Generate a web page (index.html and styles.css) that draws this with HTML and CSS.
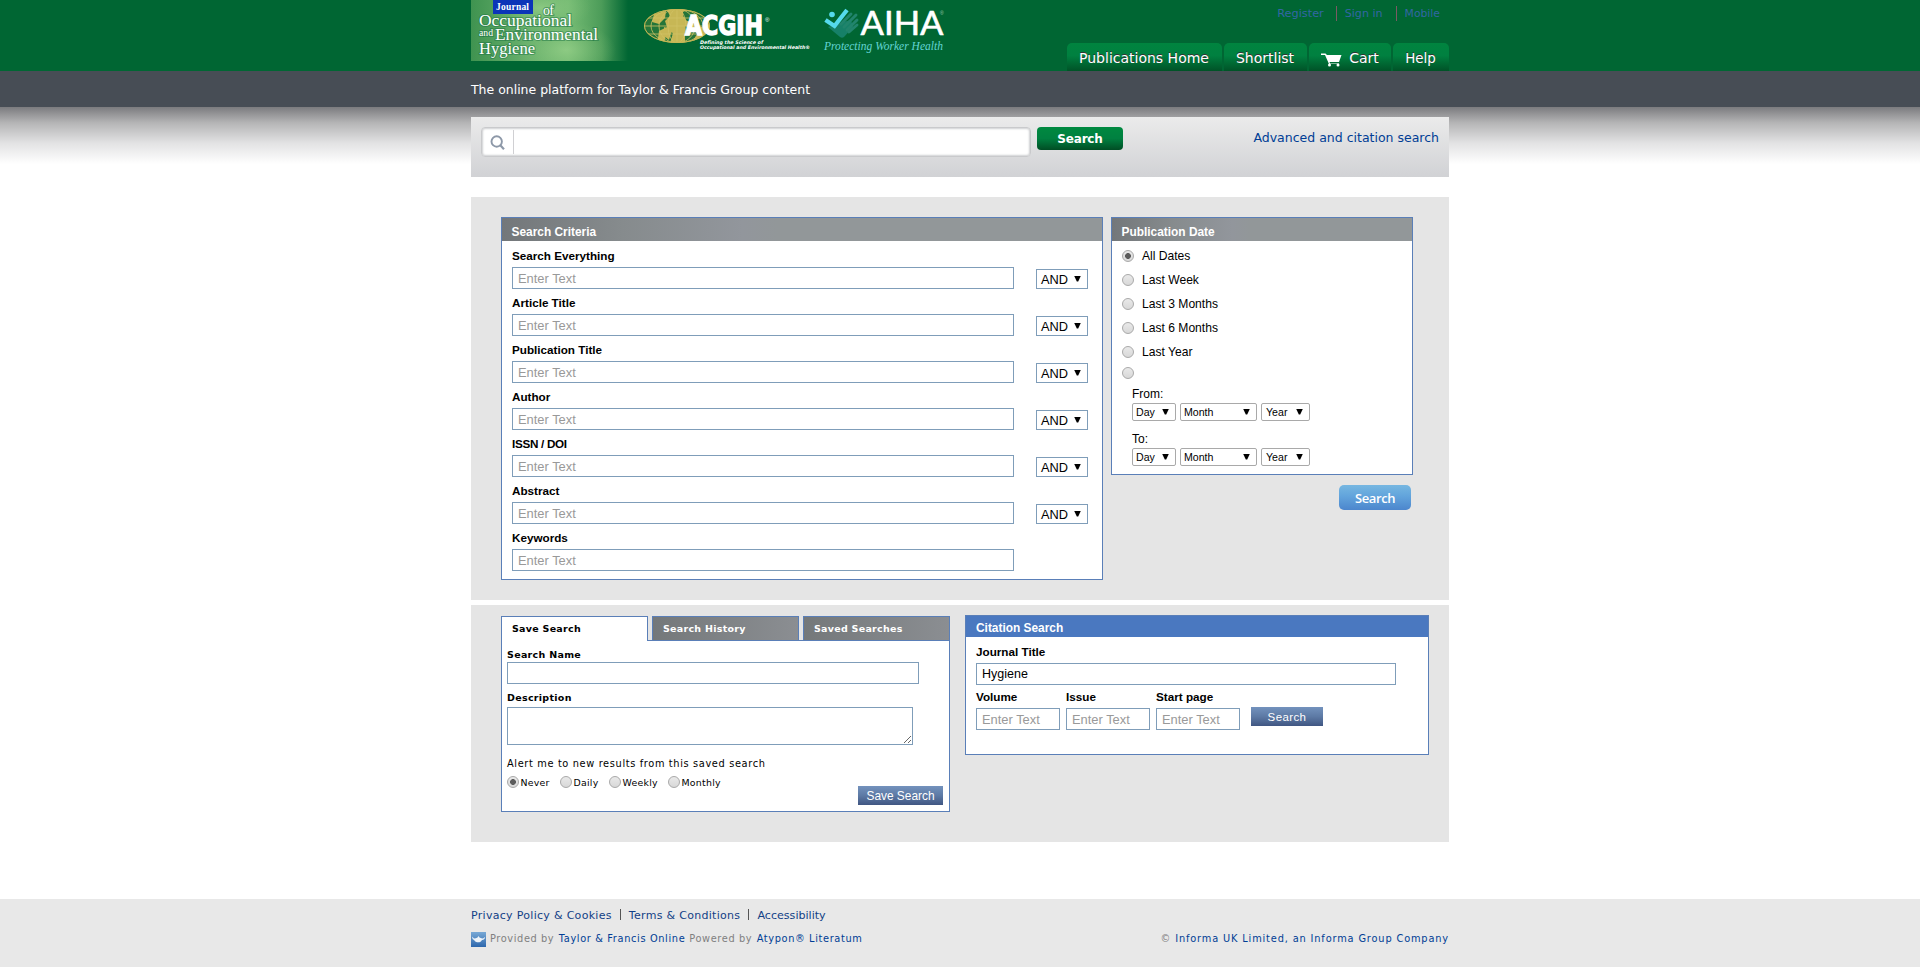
FILE: index.html
```html
<!DOCTYPE html>
<html lang="en">
<head>
<meta charset="utf-8">
<title>Advanced search</title>
<link rel="stylesheet" href="styles.css">
</head>
<body>
<header class="masthead">
  <div class="wrap masthead-row">
    <svg class="logos" width="490" height="71" viewBox="0 0 490 71">
      <defs>
        <linearGradient id="ban" x1="0" x2="1"><stop offset="0" stop-color="#3f9350"/><stop offset=".35" stop-color="#68b06c"/><stop offset=".62" stop-color="#75bc74"/><stop offset=".83" stop-color="#4c9c59"/><stop offset="1" stop-color="#006633"/></linearGradient>
        <radialGradient id="glow"><stop offset="0" stop-color="#95cf88" stop-opacity=".75"/><stop offset="1" stop-color="#7cbc74" stop-opacity="0"/></radialGradient>
        <clipPath id="cb"><rect width="160" height="61"/></clipPath>
        <clipPath id="globe"><ellipse cx="206" cy="26" rx="33" ry="16.500"/></clipPath>
      </defs>
      <g clip-path="url(#cb)">
        <rect width="157" height="61" fill="url(#ban)"/>
        <ellipse cx="95" cy="50" rx="50" ry="28" fill="url(#glow)"/>
        <ellipse cx="70" cy="8" rx="50" ry="22" fill="url(#glow)"/>
      </g>
      <rect x="22" y="0" width="40" height="14" fill="#0b35b8"/>
      <g class="serif" fill="#fff">
        <text x="25" y="9.500" font-size="9.500" textLength="33">Journal</text>
        <g class="halo">
          <text x="72" y="15" font-size="14" textLength="11">of</text>
          <text x="8" y="26" font-size="16" textLength="93" lengthAdjust="spacingAndGlyphs">Occupational</text>
          <text x="8" y="36" font-size="9.500" textLength="14" lengthAdjust="spacingAndGlyphs">and</text>
          <text x="24" y="40" font-size="16" textLength="103" lengthAdjust="spacingAndGlyphs">Environmental</text>
          <text x="8" y="53.500" font-size="16" textLength="56" lengthAdjust="spacingAndGlyphs">Hygiene</text>
        </g>
      </g>
      <ellipse cx="206" cy="26" rx="33" ry="17" fill="#c7b755"/>
      <g clip-path="url(#globe)">
        <path d="M172 8h23l4 8-5 5 2 6-8 4-2 14h-15zM196 31l6 2-3 10h-6zM212 12l6-3 20 4v11l-8 3-6-5-8-1-4-5zM214 26l8 2 4 6-6 10h-6z" fill="#006633" opacity=".82"/>
        <path d="M183 14l12-3-1 7-6 6-7-2zM193 27l8 3-3 10-5-4z" fill="#c7b755"/>
        <g fill="none" stroke="#d0c264" stroke-width=".8"><ellipse cx="206" cy="26" rx="9" ry="17"/><ellipse cx="206" cy="26" rx="18" ry="17"/><ellipse cx="206" cy="26" rx="26" ry="17"/><path d="M173 26h66M177 18h58M177 34h58M206 9v34"/></g>
      </g>
      <ellipse cx="206" cy="26" rx="32.500" ry="16.500" fill="none" stroke="#c7b755"/>
      <text x="214" y="35" class="acgih" font-size="26" textLength="78" lengthAdjust="spacingAndGlyphs">ACGIH</text>
      <text x="294" y="22" class="plain" font-size="6" fill="#fff">®</text>
      <g class="tag"><text x="229" y="43.500" font-size="4.800" textLength="63" lengthAdjust="spacingAndGlyphs">Defining the Science of</text>
      <text x="229" y="49" font-size="4.800" textLength="110" lengthAdjust="spacingAndGlyphs">Occupational and Environmental Health®</text></g>
      <path d="M357 27l12 10q2 1.500 4 0l9-10-2-7-8 2z" fill="#168068"/>
      <path d="M370 24L380 14M373 27L385 15M376 30L386 20M378 32L386 25" stroke="#21846c" stroke-width="2.900" stroke-linecap="round"/>
      <path d="M354.500 20l9 6L376 10" fill="none" stroke="#55daed" stroke-width="4.200"/>
      <circle cx="361" cy="14.500" r="2.800" fill="#55daed"/>
      <text x="389.500" y="35" class="aiha-name" font-size="33" textLength="83" lengthAdjust="spacingAndGlyphs">AIHA</text>
      <text x="469" y="15" class="plain" font-size="5" fill="#9cc6b0">®</text>
      <text x="353" y="50" class="aiha" font-size="11.500" textLength="119">Protecting Worker Health</text>
    </svg>
    <div class="masthead-nav">
      <div class="account"><a class="reg">Register</a><a class="sign">Sign in</a><a class="mob">Mobile</a></div>
      <nav class="tabs-top">
        <a class="t1">Publications Home</a><a class="t2">Shortlist</a><a class="t3"><svg width="21" height="14" viewBox="0 0 21 14"><path d="M0 .5h4.500L6 2h14.500L18 9H8.500L9 10.500h9V11H8L4 2H0z" fill="#fff"/><circle cx="8.500" cy="12" r="1.500" fill="#fff"/><circle cx="17" cy="12" r="1.500" fill="#fff"/></svg>Cart</a><a class="t4">Help</a>
      </nav>
    </div>
  </div>
</header>
<div class="strap"><div class="wrap">The online platform for Taylor &amp; Francis Group content</div></div>
<div class="fade">
  <div class="wrap quick">
    <div class="quick-box"><span class="mag"><svg width="16" height="16" viewBox="0 0 16 16"><circle cx="6.700" cy="6.500" r="5.200" fill="none" stroke="#8d98a8" stroke-width="1.900"/><path d="M10.300 10.300l3.700 3.900" stroke="#8d98a8" stroke-width="2.200"/></svg></span><input class="quick-input" type="text"></div>
    <button class="quick-btn">Search</button>
    <a class="adv">Advanced and citation search</a>
  </div>
</div>
<main class="wrap">
  <section class="block block-a">
    <div class="panel criteria">
      <h2 class="head">Search Criteria</h2>
      <div class="fields">
        <div class="field"><label>Search Everything</label><div class="line"><input placeholder="Enter Text"><div class="op">AND<i class="arrow"></i></div></div></div>
        <div class="field"><label>Article Title</label><div class="line"><input placeholder="Enter Text"><div class="op">AND<i class="arrow"></i></div></div></div>
        <div class="field"><label>Publication Title</label><div class="line"><input placeholder="Enter Text"><div class="op">AND<i class="arrow"></i></div></div></div>
        <div class="field"><label>Author</label><div class="line"><input placeholder="Enter Text"><div class="op">AND<i class="arrow"></i></div></div></div>
        <div class="field"><label class="tight">ISSN / DOI</label><div class="line"><input placeholder="Enter Text"><div class="op">AND<i class="arrow"></i></div></div></div>
        <div class="field"><label>Abstract</label><div class="line"><input placeholder="Enter Text"><div class="op">AND<i class="arrow"></i></div></div></div>
        <div class="field"><label>Keywords</label><div class="line"><input placeholder="Enter Text"></div></div>
      </div>
    </div>
    <div class="side">
      <div class="panel dates">
        <h2 class="head head-b">Publication Date</h2>
        <div class="choices">
          <label><input type="radio" name="d" checked>All Dates</label>
          <label><input type="radio" name="d">Last Week</label>
          <label><input type="radio" name="d">Last 3 Months</label>
          <label><input type="radio" name="d">Last 6 Months</label>
          <label><input type="radio" name="d">Last Year</label>
          <label class="last"><input type="radio" name="d"></label>
        </div>
        <div class="range"><div class="range-label">From:</div><div class="range-row"><div class="sel day">Day<i class="arrow"></i></div><div class="sel month">Month<i class="arrow"></i></div><div class="sel year">Year<i class="arrow"></i></div></div></div>
        <div class="range"><div class="range-label">To:</div><div class="range-row"><div class="sel day">Day<i class="arrow"></i></div><div class="sel month">Month<i class="arrow"></i></div><div class="sel year">Year<i class="arrow"></i></div></div></div>
      </div>
      <button class="blue-btn">Search</button>
    </div>
  </section>
  <section class="block block-b">
    <div class="saved">
      <div class="tabs"><span class="tab on">Save Search</span><span class="tab">Search History</span><span class="tab">Saved Searches</span></div>
      <div class="saved-body">
        <label class="cap">Search Name</label>
        <input class="name">
        <label class="cap cap-b">Description</label>
        <textarea class="desc"></textarea>
        <p class="alert">Alert me to new results from this saved search</p>
        <div class="saved-foot">
          <div class="freq"><label class="f1"><input type="radio" name="f" checked>Never</label><label class="f2"><input type="radio" name="f">Daily</label><label class="f3"><input type="radio" name="f">Weekly</label><label><input type="radio" name="f">Monthly</label></div>
          <button class="steel save-btn">Save Search</button>
        </div>
      </div>
    </div>
    <div class="panel cite">
      <h2 class="head head-c">Citation Search</h2>
      <div class="cite-body">
        <div class="cite-field"><label>Journal Title</label><input class="title" value="Hygiene"></div>
        <div class="cite-row">
          <div class="cite-field"><label>Volume</label><input placeholder="Enter Text"></div>
          <div class="cite-field"><label>Issue</label><input placeholder="Enter Text"></div>
          <div class="cite-field"><label>Start page</label><input placeholder="Enter Text"></div>
          <button class="steel cite-btn">Search</button>
        </div>
      </div>
    </div>
  </section>
</main>
<footer class="foot">
  <div class="wrap">
    <div class="foot-links"><a class="k1">Privacy Policy &amp; Cookies</a><i></i><a class="k2">Terms &amp; Conditions</a><i></i><a class="k3">Accessibility</a></div>
    <div class="foot-row">
      <div class="prov"><svg width="15" height="15" viewBox="0 0 15 15"><defs><linearGradient id="lamp" x2="0" y2="1"><stop stop-color="#78a9d6"/><stop offset="1" stop-color="#2d67ad"/></linearGradient></defs><rect width="15" height="15" fill="url(#lamp)"/><path d="M1 4.500l2 2q2 0 3.500-1l1-1.500 1 1.500q2 1 3.500 1l2-1.500q0 2.500-3 3-1 2-2.500 2.300H6Q4 10 3 8 1 7 1 4.500z" fill="#eef4fa"/></svg><span class="g1">Provided by</span><a class="g2">Taylor &amp; Francis Online</a><span class="g3">Powered by</span><a class="g4">Atypon® Literatum</a></div>
      <div class="copy">© <a>Informa UK Limited, an Informa Group Company</a></div>
    </div>
  </div>
</footer>
</body>
</html>
```
FILE: styles.css
```css
* { box-sizing: border-box; }
body { margin: 0; background: #fff; color: #000; font: 12px "Liberation Sans", Arial, sans-serif; }
.wrap { width: 978px; margin: 0 auto; }
h2, p { margin: 0; }
input, button, textarea { font: inherit; margin: 0; border-radius: 0; outline: 0; }
button { border: 0; padding: 0; color: #fff; }
a { color: #003d95; }

.masthead { height: 71px; background: #006633; }
.masthead-row { display: flex; justify-content: space-between; }
.logos { display: block; }
.serif { font-family: "Liberation Serif", serif; font-weight: bold; }
.halo { paint-order: stroke; stroke: #1c7442; stroke-width: 2px; stroke-opacity: .5; font-weight: normal; }
.plain { font-family: "Liberation Sans", sans-serif; }
.tag { font: italic bold 5px "DejaVu Sans", sans-serif; fill: #fff; }
.acgih { font-family: "DejaVu Sans", sans-serif; font-weight: bold; fill: #fff; stroke: #fff; stroke-width: 1.4px; }
.aiha-name { font-family: Lato, sans-serif; fill: #fff; stroke: #fff; stroke-width: .6px; stroke-linejoin: round; }
.aiha { font-family: "Liberation Serif", serif; font-style: italic; fill: #63d5d3; }
.masthead-nav { display: flex; flex-direction: column; align-items: flex-end; justify-content: space-between; height: 71px; }
.account { display: flex; padding: 6px 9px 0 0; height: 21px; line-height: 15px; font-family: "DejaVu Sans", sans-serif; }
.account a { color: #3366a5; }
.reg { font-size: 11.3px; padding-right: 12px; }
.sign { font-size: 11.1px; padding: 0 13px 0 8px; border-left: 1px solid #7b5a63; }
.mob { font-size: 10.8px; padding-left: 8px; border-left: 1px solid #7b5a63; }
.tabs-top { display: flex; gap: 2px; }
.tabs-top a { display: flex; align-items: center; justify-content: center; height: 28px; padding-top: 2px; border-radius: 5px 5px 0 0; background: linear-gradient(#00843f, #008040 45%, #005227); color: #fff; font: 14px "DejaVu Sans", sans-serif; text-shadow: 0 -1px #333; }
.tabs-top .t1 { width: 155px; padding-right: 1px; }
.tabs-top .t2 { width: 83px; padding-right: 1px; }
.tabs-top .t3 { width: 82px; gap: 7px; }
.tabs-top .t4 { width: 56px; font-size: 13.4px; padding-right: 1px; }
.tabs-top svg { margin-top: 3px; }

.strap { height: 36px; background: #474d55; color: #fff; font: 12.48px/37px "DejaVu Sans", sans-serif; }
.fade { height: 90px; padding-top: 10px; background: linear-gradient(#7b7b7e, #b5b5b6 28%, #e2e2e3 63%, #fff) no-repeat 0 0 / 100% 57px; }
.quick { display: flex; height: 60px; padding: 10px 10px 0; background: linear-gradient(#ebebeb, #d1d2d5); }
.quick-box { display: flex; width: 550px; height: 30px; padding: 2px; border: 1px solid #c9cacc; border-radius: 4px; background: #fff; box-shadow: inset 0 0 2px 1px #cfd0d2; }
.mag { width: 30px; border-right: 1px solid #d0d0d3; padding: 5px 0 0 6px; }
.quick-input { flex: 1; border: 0; background: transparent; }
.quick-btn { width: 86px; height: 23px; margin-left: 6px; border-radius: 4px; background: linear-gradient(#008940, #008040 50%, #004d24); font: bold 12px "DejaVu Sans", sans-serif; letter-spacing: -.2px; }
.adv { margin-left: auto; font: 12.5px/22px "DejaVu Sans", sans-serif; }

.block { background: #e5e5e5; display: flex; }
.block-a { height: 403px; margin-top: 0; padding: 20px 36px 0 30px; justify-content: space-between; align-items: flex-start; }
.panel { border: 1px solid #5a7fb8; background: #fff; }
.head { height: 23px; padding: 6px 0 0 9.5px; font-size: 11.9px; line-height: 17px; color: #fff; background: linear-gradient(90deg, #73777a, #868b8d 20%, #92969c 40%, #929799 46%); }
.criteria { width: 602px; height: 363px; }
.fields { padding: 8px 10px 0; }
.field { height: 47px; }
.field label, .cite-field label { display: block; height: 18px; font-size: 11.7px; line-height: 14px; font-weight: bold; }
.field .tight { letter-spacing: -.3px; }
.line { display: flex; justify-content: space-between; width: 576px; }
.line input, .cite-field input, .name { border: 1px solid #7f9db9; height: 22px; padding: 1px 5px; font-size: 12.9px; background: #fff; }
.line input { width: 502px; }
::placeholder { color: #999; opacity: 1; }
.op { display: flex; align-items: center; justify-content: space-between; width: 52px; height: 20px; margin-top: 2px; padding: 0 6px 0 4px; border: 1px solid #7f9db9; font-size: 12.8px; }
.arrow { width: 7px; height: 6px; margin-top: -1px; background: #000; clip-path: polygon(0 0, 100% 0, 60% 100%, 40% 100%); }
.side { display: flex; flex-direction: column; width: 302px; }
.dates { height: 258px; }
.choices { padding: 3px 0 0 10px; }
.choices label { display: flex; align-items: center; gap: 8px; height: 24px; font-size: 12.1px; }
.choices .last { height: 18px; }
input[type="radio"] { appearance: none; width: 12px; height: 12px; border: 1px solid #a9a9a9; border-radius: 50%; background: linear-gradient(#e9e9e9, #d8d8d8); flex: none; }
input[type="radio"]:checked { background: radial-gradient(circle, #5c5c5c 0 2.600px, transparent 3.200px), linear-gradient(#e9e9e9, #d8d8d8); }
.range { height: 45px; padding: 4px 0 0 20px; }
.range-label { height: 17px; font-size: 12px; line-height: 17px; }
.range-row { display: flex; }
.sel { display: flex; align-items: center; justify-content: space-between; height: 18px; padding: 0 6px 0 3px; border: 1px solid #a9a9a9; border-radius: 2px; font-size: 10.6px; }
.day { width: 44px; margin-right: 4px; }
.month { width: 77px; margin-right: 4px; }
.year { width: 49px; padding-left: 4px; }
.blue-btn { align-self: flex-end; width: 72px; height: 25px; margin: 10px 2px 0 0; border-radius: 5px; background: linear-gradient(#76b7e1, #62a4dc 45%, #4c86cd); font: 600 13px "Open Sans", "Noto Sans", sans-serif; padding-top: 1px; letter-spacing: -.4px; }

.block-b { height: 237px; margin-top: 5px; padding: 10px 20px 0 30px; justify-content: space-between; align-items: flex-start; }
.saved { width: 449px; margin-top: 1px; font-family: "DejaVu Sans", sans-serif; }
.tabs { display: flex; gap: 4px; height: 25px; background: linear-gradient(#5a7fb8, #5a7fb8) no-repeat 0 24px / 100% 1px; }
.tab { width: 147px; height: 25px; padding-left: 10px; border: 1px solid #5a7fb8; background: linear-gradient(90deg, #74787a, #8b8e92); color: #fff; font-size: 9.5px; letter-spacing: .27px; font-weight: bold; line-height: 24px; }
.tab.on { background: #fff; color: #000; border-bottom: 0; }
.saved-body { height: 171px; padding: 8px 6px 0 5px; border: 1px solid #5a7fb8; border-top: 0; background: #fff; }
.saved-body > * { display: block; }
.cap { height: 13px; font-size: 9.5px; letter-spacing: .3px; line-height: 11px; font-weight: bold; }
.name { width: 412px; }
.cap-b { height: 23px; padding-top: 8px; }
.desc { width: 406px; height: 38px; border: 1px solid #7f9db9; background: #fff; }
.alert { margin-top: 13px; height: 17px; font-size: 9.8px; line-height: 11px; letter-spacing: .64px; white-space: nowrap; }
.saved-body > .saved-foot { display: flex; justify-content: space-between; }
.freq { display: flex; height: 14px; font-size: 9.4px; line-height: 16px; letter-spacing: .25px; }
.freq label { display: flex; gap: 1.5px; }
.freq input { margin-top: 1px; }
.f1 { width: 53px; } .f2 { width: 49px; } .f3 { width: 59px; }
.steel { background: linear-gradient(#7392bd, #5d7aa5 50%, #405682); height: 19px; }
.save-btn { width: 85px; margin-top: 11px; font: 11.9px "Liberation Sans", sans-serif; }
.cite { width: 464px; height: 140px; }
.head-c { height: 21px; padding: 4px 0 0 10px; background: #4a78c0; }
.cite-body { padding: 8px 10px 0; }
.cite-field { height: 45px; }
.cite-field input { display: block; width: 84px; }
.cite-field .title { width: 420px; font-size: 12.5px; }
.cite-field label { height: 18px; white-space: nowrap; }
.cite-row { display: flex; gap: 6px; }
.cite-btn { width: 72px; margin: 17px 0 0 5px; font-size: 11.5px; letter-spacing: .4px; }

.foot { height: 68px; margin-top: 57px; padding-top: 9px; background: #e8e8e8; font-family: "DejaVu Sans", sans-serif; }
.foot-links { display: flex; height: 24px; line-height: 15px; }
.foot-links a { color: #123f86; white-space: nowrap; }
.foot-links i { width: 1px; height: 11px; background: #555; margin: 1px 8px 0 8px; }
.k1, .k2 { font-size: 11px; letter-spacing: .3px; } .k3 { font-size: 11.1px; }
.foot-row { display: flex; justify-content: space-between; font-size: 9.8px; line-height: 13px; color: #808080; white-space: nowrap; }
.prov { display: flex; }
.prov span { margin-left: 4px; }
.prov a { margin-left: 4.5px; }
.g1 { letter-spacing: .6px; } .g2 { letter-spacing: .64px; } .g3 { letter-spacing: .6px; } .g4 { letter-spacing: .62px; }
.copy { letter-spacing: .85px; }
```
